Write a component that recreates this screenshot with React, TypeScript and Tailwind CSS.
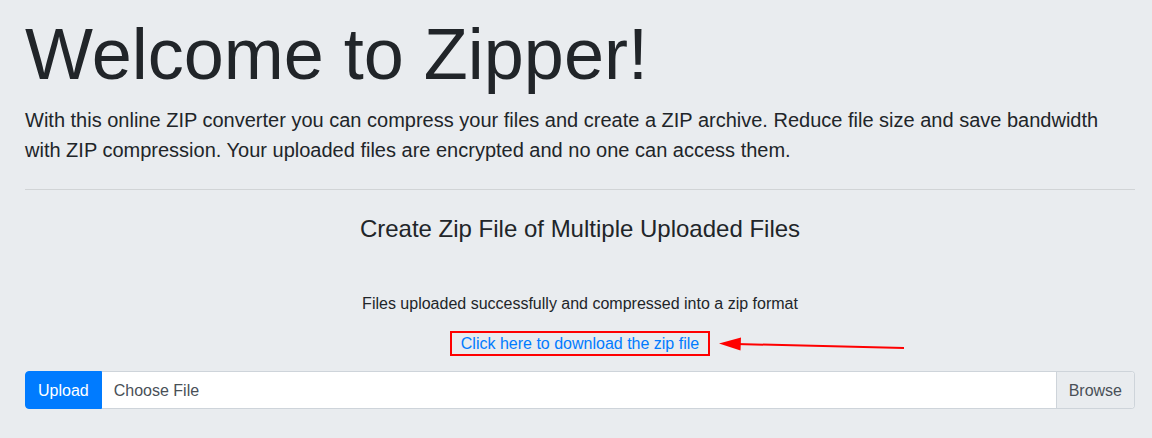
export default function App() {
  return (
    <div
      className="relative w-[1152px] h-[438px] overflow-hidden bg-[#e9ecef] text-[#212529]"
      style={{ fontFamily: '"Liberation Sans", Arial, sans-serif' }}
    >
      <div className="pl-[25px] pr-[17px] pt-[11px]">
        <h1 className="text-[72px] leading-[86px] font-light mb-2">Welcome to Zipper!</h1>
        <p className="text-[20px] leading-[30px] font-light">
          With this online ZIP converter you can compress your files and create a ZIP archive. Reduce file size and save bandwidth
          with ZIP compression. Your uploaded files are encrypted and no one can access them.
        </p>
        <hr className="mt-6 border-0 border-t border-[rgba(0,0,0,0.1)]" />
        <h4 className="mt-6 text-[24px] leading-[29px] text-center mb-2">Create Zip File of Multiple Uploaded Files</h4>
        <div className="h-[41px]" />
        <p className="text-[16px] leading-[24px] text-center">Files uploaded successfully and compressed into a zip format</p>
        <div className="flex justify-center mt-[15px]">
          <a className="border-2 border-[#ff0000] px-[9px] text-[16px] leading-[21px] text-[#007bff]">
            Click here to download the zip file
          </a>
        </div>
        <div className="mt-[15px] flex h-[38px] text-[16px] leading-[24px]">
          <div className="px-3 pt-[7px] pb-[5px] border border-[#007bff] bg-[#007bff] text-white rounded-l-[4px]">Upload</div>
          <div className="flex-1 flex bg-white border border-l-0 border-[#ced4da] rounded-r-[4px] overflow-hidden">
            <span className="flex-1 px-3 pt-[7px] pb-[5px] text-[#495057]">Choose File</span>
            <span className="px-3 pt-[7px] pb-[5px] bg-[#e9ecef] border-l border-[#ced4da] text-[#495057]">Browse</span>
          </div>
        </div>
      </div>
      <svg className="absolute left-0 top-0 pointer-events-none" width="1152" height="438">
        <line x1="904" y1="348" x2="736" y2="344" stroke="#ff0000" strokeWidth="2" />
        <polygon points="719,343.5 741,337.5 740.5,350.5" fill="#ff0000" />
      </svg>
    </div>
  );
}
